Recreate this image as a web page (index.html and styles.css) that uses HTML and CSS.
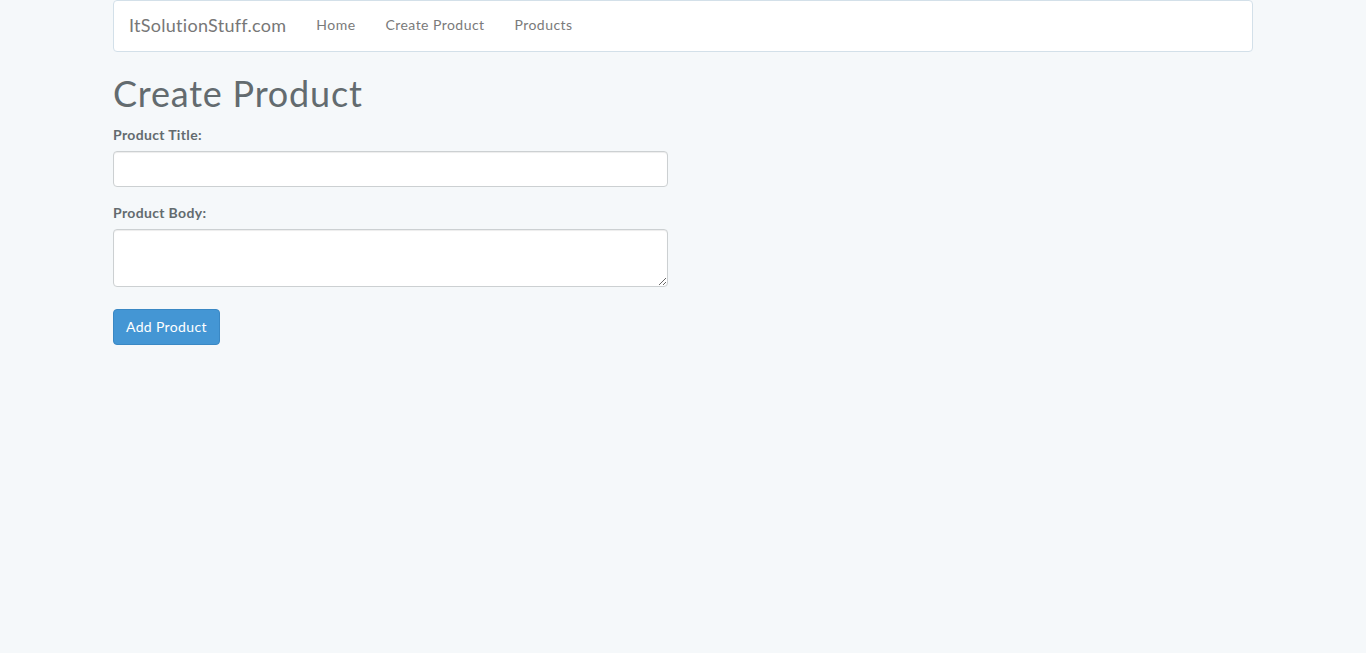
FILE: index.html
```html
<!DOCTYPE html>
<html lang="en">
<head>
    <meta charset="UTF-8">
    <meta name="viewport" content="width=device-width, initial-scale=1.0">
    <title>Create Product</title>

    <link rel="stylesheet" href="styles.css">
</head>
<body>
    <div class="container">
        <nav class="navbar">
            <a class="navbar__brand" href="#">ItSolutionStuff.com</a>
            <ul class="navbar__nav">
                <li><a href="#">Home</a></li>
                <li><a href="#">Create Product</a></li>
                <li><a href="#">Products</a></li>
            </ul>
        </nav>

        <h1 class="page-title">Create Product</h1>

        <form class="product-form">
            <div class="form-group">
                <label for="title">Product Title:</label>
                <input type="text" id="title" class="form-control">
            </div>
            <div class="form-group">
                <label for="body">Product Body:</label>
                <textarea id="body" class="form-control"></textarea>
            </div>
            <div class="form-actions">
                <button type="submit" class="btn btn--primary">Add Product</button>
            </div>
        </form>
    </div>
</body>
</html>
```

FILE: styles.css
```css
* {
    margin: 0;
    padding: 0;
    box-sizing: border-box;
}

body {
    background-color: #f5f8fa;
    color: #636b6f;
    font-family: 'Lato', sans-serif;
    font-size: 14px;
    line-height: 1.6;
    letter-spacing: 0.3px;
}

a {
    text-decoration: none;
}

.container {
    width: 1170px;
    margin: 0 auto;
    padding: 0 15px;
}

.navbar {
    display: flex;
    align-items: center;
    height: 52px;
    background-color: #fff;
    border: 1px solid #d3e0e9;
    border-radius: 4px;
    margin-bottom: 22px;
}

.navbar__brand {
    color: #777;
    font-size: 18px;
    line-height: 20px;
    letter-spacing: 0.28px;
    padding: 14px 15px 16px;
}

.navbar__nav {
    display: flex;
    list-style: none;
}

.navbar__nav a {
    color: #7a7a7a;
    display: block;
    letter-spacing: 0.45px;
    line-height: 20px;
    padding: 14px 15px 16px;
}

.page-title {
    font-size: 36px;
    font-weight: 400;
    line-height: 1.1;
    letter-spacing: 0.8px;
    margin-bottom: 10px;
}

.product-form {
    width: 555px;
}

.form-group {
    margin-bottom: 15px;
}

.form-group label {
    display: block;
    font-weight: 700;
    letter-spacing: 0.35px;
    margin-bottom: 5px;
}

.form-control {
    display: block;
    width: 100%;
    height: 36px;
    background-color: #fff;
    border: 1px solid #ccd0d2;
    border-radius: 4px;
    box-shadow: inset 0 1px 1px rgba(0, 0, 0, 0.075);
    color: #555;
    font-family: inherit;
    font-size: 14px;
    padding: 6px 12px;
}

textarea.form-control {
    height: 58px;
}

.form-actions {
    padding-top: 7px;
}

.btn {
    border: 1px solid transparent;
    border-radius: 4px;
    cursor: pointer;
    font-family: inherit;
    font-size: 14px;
    letter-spacing: 0.35px;
    line-height: 22px;
    padding: 6px 12px;
}

.btn--primary {
    background-color: #4496d4;
    border-color: #3a88c4;
    color: #fff;
}
```
